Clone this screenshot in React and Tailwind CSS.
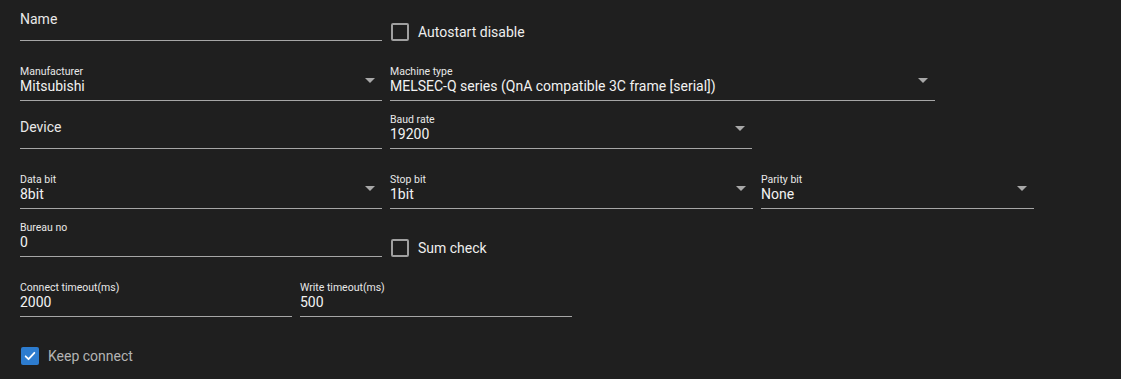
// App.jsx
// Formulário de conexão serial — tema escuro
import React from 'react'

function Arrow() {
  return (
    <span className="absolute right-[7px] bottom-[17px] w-0 h-0 border-l-[5px] border-r-[5px] border-t-[5px] border-l-transparent border-r-transparent border-t-[#a8a8a8]" />
  )
}

function Field({ label, value, placeholder, select, className }) {
  return (
    <div className={`relative flex flex-col justify-end border-b border-[#a6a6a6] ${className}`}>
      {placeholder ? (
        <div className="text-[14px] leading-[18px] pb-3 text-[#e8e8e8]">{placeholder}</div>
      ) : (
        <>
          <div className="text-[10.5px] leading-[10px] text-[#e8e8e8]">{label}</div>
          <div className="text-[14px] leading-[18px] pb-[5px] text-[#f2f2f2]">{value}</div>
        </>
      )}
      {select && <Arrow />}
    </div>
  )
}

function Check({ label, checked, dim }) {
  return (
    <div className="flex items-center h-[18px] ml-px">
      {checked ? (
        <span className="w-[18px] h-[18px] rounded-[2px] bg-[#2d7ccf] flex items-center justify-center">
          <svg width="14" height="14" viewBox="0 0 24 24" fill="none" stroke="#ffffff" strokeWidth="3" strokeLinecap="round" strokeLinejoin="round">
            <path d="M4.5 12.5l5 5 10-11" />
          </svg>
        </span>
      ) : (
        <span className="w-[18px] h-[18px] rounded-[2px] border-2 border-[#a0a0a0]" />
      )}
      <span className={`ml-[9px] text-[14px] leading-[18px] ${dim ? 'text-[#b4b4b4]' : 'text-[#eeeeee]'}`}>{label}</span>
    </div>
  )
}

export default function App() {
  return (
    <div className="h-[379px] bg-[#1f1f1f] pl-5 font-['Roboto','Liberation_Sans',sans-serif] overflow-hidden">
      {/* linha 1 */}
      <div className="flex items-end gap-2">
        <Field placeholder="Name" className="w-[362px] h-[41px]" />
        <Check label="Autostart disable" />
      </div>

      {/* linha 2 */}
      <div className="flex items-end gap-2">
        <Field label="Manufacturer" value="Mitsubishi" select className="w-[362px] h-[60px]" />
        <Field label="Machine type" value="MELSEC-Q series (QnA compatible 3C frame [serial])" select className="w-[545px] h-[60px]" />
      </div>

      {/* linha 3 */}
      <div className="flex items-end gap-2">
        <Field placeholder="Device" className="w-[362px] h-[48px]" />
        <Field label="Baud rate" value="19200" select className="w-[362px] h-[48px]" />
      </div>

      {/* linha 4 */}
      <div className="flex items-end gap-2">
        <Field label="Data bit" value="8bit" select className="w-[362px] h-[60px]" />
        <Field label="Stop bit" value="1bit" select className="w-[363px] h-[60px]" />
        <Field label="Parity bit" value="None" select className="w-[273px] h-[60px]" />
      </div>

      {/* linha 5 */}
      <div className="flex items-end gap-2">
        <Field label="Bureau no" value="0" className="w-[362px] h-[48px]" />
        <Check label="Sum check" />
      </div>

      {/* linha 6 */}
      <div className="flex items-end gap-2">
        <Field label="Connect timeout(ms)" value="2000" className="w-[272px] h-[60px]" />
        <Field label="Write timeout(ms)" value="500" className="w-[272px] h-[60px]" />
      </div>

      <div className="mt-[30px]">
        <Check label="Keep connect" checked dim />
      </div>
    </div>
  )
}
